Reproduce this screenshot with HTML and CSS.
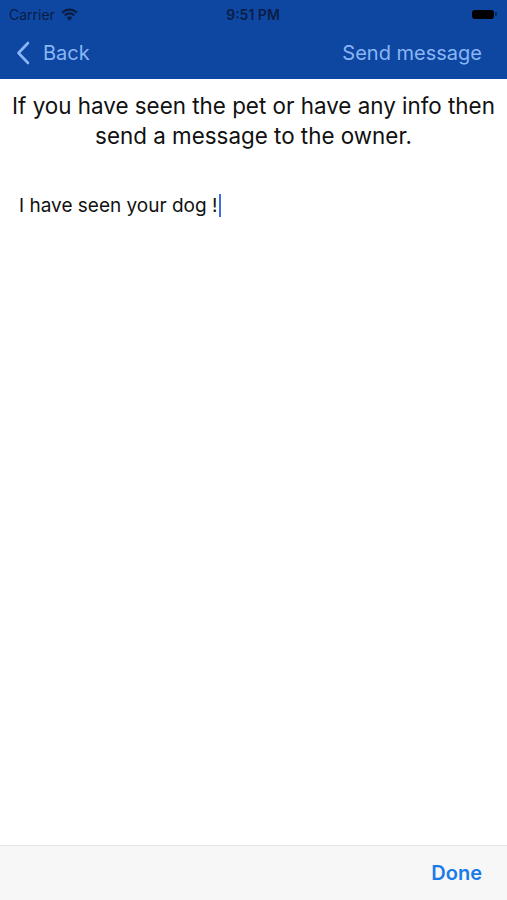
FILE: index.html
```html
<!DOCTYPE html>
<html lang="en">
<head>
	<meta charset="UTF-8">
	<meta name="viewport" content="width=device-width, initial-scale=1.0">
	<title>Send message</title>
	<link rel="stylesheet" href="styles.css">
</head>
<body>
	<div class="screen">
		<header class="top">
			<div class="status">
				<div class="status-left">
					<span>Carrier</span>
					<svg class="wifi" width="17" height="13" viewBox="0 0 16 12">
						<path d="M8 11.8 L5.4 9 A3.6 3.6 0 0 1 10.6 9 Z" fill="#0b1d45"/>
						<path d="M3.5 6.9 A6.3 6.3 0 0 1 12.5 6.9" stroke="#0b1d45" stroke-width="2.1" fill="none"/>
						<path d="M1.1 4.3 A9.7 9.7 0 0 1 14.9 4.3" stroke="#0b1d45" stroke-width="2.1" fill="none"/>
					</svg>
				</div>
				<div class="status-time">9:51 PM</div>
				<div class="status-right">
					<span class="battery"></span>
					<span class="battery-tip"></span>
				</div>
			</div>
			<nav class="navbar">
				<a class="back">
					<svg width="14" height="24" viewBox="0 0 14 24">
						<path d="M12 2 L2.5 12 L12 22" stroke="#8ab6f5" stroke-width="2.6" fill="none" stroke-linecap="round" stroke-linejoin="round"/>
					</svg>
					<span>Back</span>
				</a>
				<a class="send">Send message</a>
			</nav>
		</header>

		<main class="content">
			<p class="intro">If you have seen the pet or have any info then send a message to the owner.</p>
			<div class="message">I have seen your dog !<span class="caret"></span></div>
		</main>

		<footer class="toolbar">
			<a class="done">Done</a>
		</footer>
	</div>
</body>
</html>
```

FILE: styles.css
```css
body {
	margin: 0;
	padding: 0;
	font-family: "Inter", "Liberation Sans", sans-serif;
	background: #fff;
}
.screen {
	width: 507px;
	height: 900px;
	display: flex;
	flex-direction: column;
	overflow: hidden;
}

/* header */
.top {
	background: #0d47a1;
	height: 79px;
	display: flex;
	flex-direction: column;
}
.status {
	height: 28px;
	display: flex;
	align-items: center;
	justify-content: space-between;
	padding: 0 10px 0 9px;
	color: #0b1d45;
	font-size: 14px;
}
.status-left {
	display: flex;
	align-items: center;
	gap: 6px;
	width: 120px;
}
.status-time {
	font-weight: 600;
	font-size: 14px;
}
.status-right {
	width: 120px;
	display: flex;
	justify-content: flex-end;
	align-items: center;
}
.battery {
	width: 22px;
	height: 9px;
	background: #000;
	border-radius: 3px;
}
.battery-tip {
	width: 2px;
	height: 4px;
	background: rgba(0, 0, 0, 0.4);
	margin-left: 1px;
	border-radius: 0 1px 1px 0;
}

.navbar {
	flex: 1;
	display: flex;
	align-items: center;
	justify-content: space-between;
	padding: 0 25px 2px 16px;
	color: #8ab6f5;
	font-size: 20px;
}
.back {
	display: flex;
	align-items: center;
	gap: 13px;
}

/* body */
.content {
	flex: 1;
	padding: 12px 8px 0;
}
.intro {
	margin: 0;
	text-align: center;
	font-size: 22.4px;
	line-height: 30px;
	color: #111;
}
.message {
	margin: 43px 0 0 11px;
	font-size: 19px;
	color: #111;
	display: flex;
	align-items: center;
}
.caret {
	display: inline-block;
	width: 2px;
	height: 23px;
	background: #3b6fe0;
	margin-left: 2px;
}

/* bottom toolbar */
.toolbar {
	height: 54px;
	background: #f7f7f7;
	border-top: 1px solid #e6e6e6;
	display: flex;
	align-items: center;
	justify-content: flex-end;
	padding: 0 25px 0 0;
}
.done {
	color: #1a7ae6;
	font-weight: 600;
	font-size: 20px;
}
```
